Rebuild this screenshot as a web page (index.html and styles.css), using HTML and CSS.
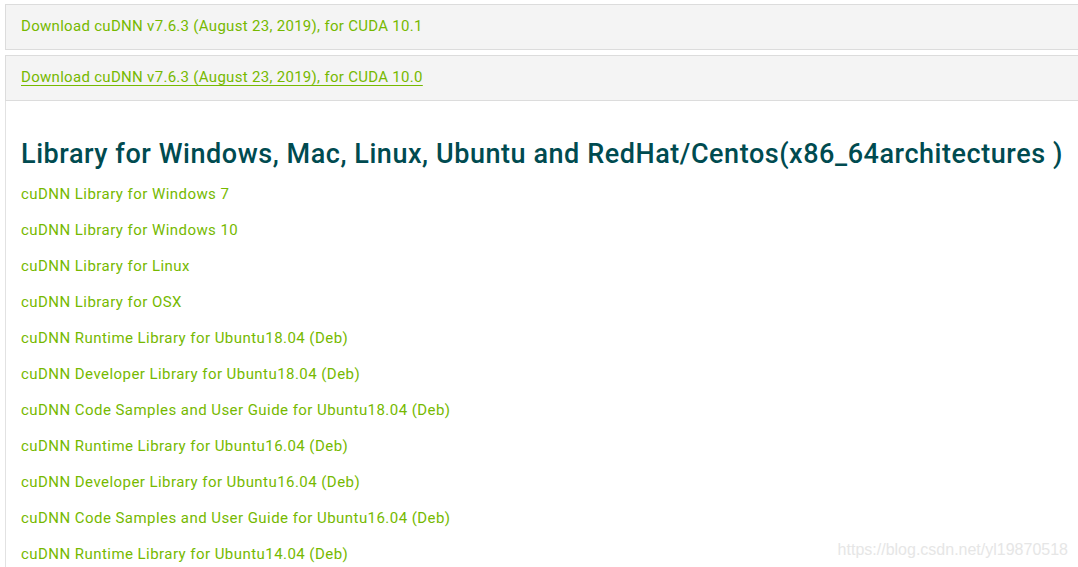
FILE: index.html
```html
<!DOCTYPE html>
<html>
<head>
<meta charset="utf-8">
<link rel="stylesheet" href="styles.css">
</head>
<body>
<div class="page">
  <div class="panel"><a class="dl" href="#">Download cuDNN v7.6.3 (August 23, 2019), for CUDA 10.1</a></div>
  <div class="panel"><a class="dl active" href="#">Download cuDNN v7.6.3 (August 23, 2019), for CUDA 10.0</a></div>
  <div class="content">
    <h2 class="title">Library for Windows, Mac, Linux, Ubuntu and RedHat/Centos(x86_64architectures )</h2>
    <ul class="links">
      <li><a href="#">cuDNN Library for Windows 7</a></li>
      <li><a href="#">cuDNN Library for Windows 10</a></li>
      <li><a href="#">cuDNN Library for Linux</a></li>
      <li><a href="#">cuDNN Library for OSX</a></li>
      <li><a href="#">cuDNN Runtime Library for Ubuntu18.04 (Deb)</a></li>
      <li><a href="#">cuDNN Developer Library for Ubuntu18.04 (Deb)</a></li>
      <li><a href="#">cuDNN Code Samples and User Guide for Ubuntu18.04 (Deb)</a></li>
      <li><a href="#">cuDNN Runtime Library for Ubuntu16.04 (Deb)</a></li>
      <li><a href="#">cuDNN Developer Library for Ubuntu16.04 (Deb)</a></li>
      <li><a href="#">cuDNN Code Samples and User Guide for Ubuntu16.04 (Deb)</a></li>
      <li><a href="#">cuDNN Runtime Library for Ubuntu14.04 (Deb)</a></li>
    </ul>
  </div>
  <div class="watermark">https://blog.csdn.net/yl19870518</div>
</div>
</body>
</html>
```
FILE: styles.css
```css
html, body {
  margin: 0;
  padding: 0;
  background: #fff;
  overflow: hidden;
}
body {
  font-family: Roboto, "Liberation Sans", sans-serif;
}
.page {
  position: relative;
  height: 567px;
  padding: 4px 0 0 5px;
  box-sizing: border-box;
  display: flex;
  flex-direction: column;
  gap: 5px;
}
.panel {
  flex-shrink: 0;
  height: 44px;
  background: #f4f4f4;
  border: 1px solid #dcdcdc;
  border-right: none;
  display: flex;
  align-items: center;
  padding-left: 15px;
}
.dl {
  color: #76b900;
  font-size: 15px;
  letter-spacing: 0.3px;
  text-decoration: none;
  margin-top: -2px;
}
.dl.active {
  text-decoration: underline;
  text-underline-offset: 3px;
}
.content {
  flex-shrink: 0;
  margin-top: -5px;
  border-left: 1px solid #e2e2e2;
  padding-left: 15px;
  flex-grow: 1;
}
.title {
  margin: 36px 0 0;
  font-size: 27px;
  font-weight: 500;
  letter-spacing: 0.55px;
  color: #004b50;
  line-height: 34px;
  white-space: nowrap;
}
.links {
  list-style: none;
  margin: 5px 0 0;
  padding: 0;
}
.links li {
  height: 36px;
  line-height: 36px;
  font-size: 15px;
  letter-spacing: 0.45px;
}
.links a {
  color: #76b900;
  text-decoration: none;
}
.watermark {
  position: absolute;
  right: 10px;
  bottom: 8px;
  font-family: "Liberation Sans", Arial, sans-serif;
  font-size: 16px;
  color: #e6e6e6;
}
```
